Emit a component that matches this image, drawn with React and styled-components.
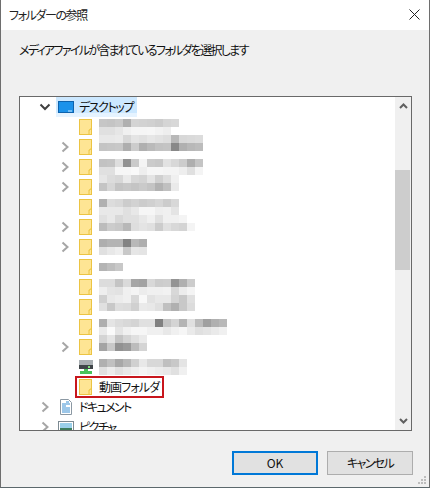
import React from 'react';
import styled, { createGlobalStyle } from 'styled-components';

const Global = createGlobalStyle`
  html, body {
    margin: 0;
    padding: 0;
    background: #f0f0f0;
  }
  body {
    font: 12px/16px "Noto Sans CJK JP", "Noto Sans", sans-serif;
    font-feature-settings: "palt";
    color: #111;
  }
`;

const Dialog = styled.div`
  position: relative;
  box-sizing: border-box;
  width: 430px;
  height: 488px;
  display: flex;
  flex-direction: column;
  background: #f0f0f0;
  border: 1px solid #6e6e6e;
  border-top: none;
  border-bottom-color: #5c686c;
`;

const TitleBar = styled.header`
  height: 30px;
  flex: none;
  display: flex;
  justify-content: space-between;
  align-items: center;
  padding: 0 9px 0 8px;
  background: #fff;
`;

const Title = styled.h1`
  margin: 0;
  font-size: 12px;
  font-weight: 400;
  letter-spacing: -1.4px;
  color: #222;
`;

const CloseIcon = styled.svg`
  display: block;
  width: 11px;
  height: 11px;
  margin-top: -2px;
`;

const Message = styled.p`
  margin: 12px 0 38px 18px;
  line-height: 16px;
  letter-spacing: -1.7px;
`;

const TreeBox = styled.div`
  box-sizing: border-box;
  width: 393px;
  height: 335px;
  margin-left: 18px;
  display: flex;
  background: #fff;
  border: 1px solid #696969;
`;

const TreeList = styled.ul`
  flex: 1;
  min-width: 0;
  margin: 0;
  padding: 0;
  list-style: none;
  overflow: hidden;
`;

const Row = styled.li`
  height: 20px;
  display: flex;
  align-items: center;
  gap: 3px;
  padding-left: ${p => (p.$level === 1 ? 17 : 37)}px;
`;

const Toggle = styled.svg`
  display: block;
  flex: none;
  width: 16px;
  height: 16px;
`;

const Item = styled.div`
  height: 20px;
  display: flex;
  align-items: center;
  gap: 5px;
  padding: 0 4px 0 2px;
  background: ${p =>
    p.$selected ? 'linear-gradient(#cce8ff 0 16px, #e5f3ff 16px)' : 'transparent'};
  box-shadow: ${p =>
    p.$marked ? '0 0 0 1px #c8161d, inset 0 0 0 1px #c8161d' : 'none'};
`;

const IconSlot = styled.svg`
  display: block;
  flex: none;
  width: 16px;
  height: 16px;
`;

const Label = styled.span`
  white-space: nowrap;
  letter-spacing: ${p => p.$spacing}px;
`;

const Blur = styled.svg`
  display: block;
  flex: none;
  align-self: flex-start;
  margin-top: ${p => p.$top}px;
  overflow: visible;
`;

const ScrollBar = styled.div`
  flex: none;
  width: 16px;
  display: flex;
  flex-direction: column;
  background: #f0f0f0;
`;

const ArrowBox = styled.div`
  flex: none;
  height: 17px;
  display: flex;
  align-items: center;
  justify-content: center;
`;

const Track = styled.div`
  flex: 1;
`;

const Thumb = styled.div`
  width: 15px;
  height: 100px;
  margin-top: 56px;
  background: #cdcdcd;
`;

const Footer = styled.footer`
  display: flex;
  justify-content: flex-end;
  gap: 9px;
  margin-top: 20px;
  padding-right: 16px;
`;

const Button = styled.button`
  box-sizing: border-box;
  width: 86px;
  height: 24px;
  padding: 0;
  font: inherit;
  font-feature-settings: inherit;
  letter-spacing: ${p => (p.$primary ? 0 : -1.6)}px;
  color: #111;
  background: #e1e1e1;
  border: ${p => (p.$primary ? '2px solid #0078d7' : '1px solid #adadad')};
  border-radius: 0;
`;

const Grip = styled.svg`
  position: absolute;
  right: 2px;
  bottom: 2px;
  width: 10px;
  height: 10px;
`;

const Folder = () => (
  <IconSlot viewBox="0 0 16 16">
    <rect x="1.5" y="0.5" width="12" height="15" fill="#fee594" stroke="#ecc443" />
    <path d="M11 16v-5h1v-1h2" fill="none" stroke="#ecc443" />
  </IconSlot>
);

const Desktop = () => (
  <IconSlot viewBox="0 0 16 16">
    <rect x="0.5" y="2.5" width="15" height="11" fill="#1b92ea" stroke="#0e63ad" />
    <path d="M10 12h4" stroke="#cdeaff" strokeWidth="1" />
  </IconSlot>
);

const Drive = () => (
  <IconSlot viewBox="0 0 16 16">
    <rect x="1" y="1" width="14" height="5" fill="#a9afb2" />
    <rect x="1" y="6" width="14" height="4" fill="#3f4548" />
    <rect x="10" y="7" width="2" height="2" fill="#7fe07a" />
    <path d="M6 10h4v2h4v3H2v-3h4z" fill="#49c25a" />
  </IconSlot>
);

const Documents = () => (
  <IconSlot viewBox="0 0 16 16">
    <path d="M2.5.5h8l3 3v12h-11z" fill="#fff" stroke="#8b98a3" />
    <path d="M8 3h3M4 5h8M4 7h4M4 9h8M4 11h8M4 13h8" stroke="#3a8fd3" />
  </IconSlot>
);

const Pictures = () => (
  <IconSlot viewBox="0 0 16 16">
    <rect x="0.5" y="2.5" width="15" height="12" fill="#fff" stroke="#7c8a92" />
    <rect x="2" y="4" width="12" height="5" fill="#9ad0ea" />
    <rect x="2" y="9" width="12" height="4" fill="#3d7d5d" />
  </IconSlot>
);

const Collapsed = () => (
  <Toggle viewBox="0 0 16 16">
    <path d="M5.5 3.5 10.5 8l-5 4.5" fill="none" stroke="#a6a6a6" strokeWidth="2" />
  </Toggle>
);

const Expanded = () => (
  <Toggle viewBox="0 0 16 16">
    <path d="M3.5 5.5 8 10l4.5-4.5" fill="none" stroke="#404040" strokeWidth="2" />
  </Toggle>
);

const Arrow = ({ up }) => (
  <svg width="9" height="7" viewBox="0 0 9 7">
    <path d={up ? 'M1 6 4.5 2.5 8 6' : 'M1 1l3.5 3.5L8 1'} fill="none" stroke="#606060" strokeWidth="2" />
  </svg>
);

// pixelated names from the screenshot, one string per 8px band of grey cells
const Pixels = ({ top, bands }) => {
  const lines = bands.map(b => b.split(' '));
  const width = Math.max(...lines.map(l => l.length)) * 8;
  return (
    <Blur $top={top} width={width} height={lines.length * 8} shapeRendering="crispEdges">
      {lines.map((cells, y) =>
        cells.map((c, x) => (
          <rect key={x} x={x * 8} y={y * 8} width="8" height="8" fill={`#${c}${c}${c}`} />
        ))
      )}
    </Blur>
  );
};

const folders = [
  { top: 2, bands: ['c6 c4 c9 b0 d4 d2 d0 cc d5 d8', 'e0 e0 e6 f0 f5 f5 f6 f2 ee'] },
  { open: true, top: -2, bands: ['e8 e8 ea d8 e4 e0 e6 e2 de b8 d8 da dc', 'c4 c6 c8 ae cc b0 ba c2 c4 88 b0 b8 bc'] },
  { open: true, top: 2, bands: ['c2 c4 de 92 ca f4 cb c8 e2 d8 cc ae c4', 'e0 e0 f6 f6 f9 ee f6 f6 f4 f4 ee e0 f4'] },
  { open: true, top: -2, bands: ['e6 dc d8 ea d8 d4 e4 d0 de f0', 'c4 d6 c4 c8 c4 ca c4 b2 c0 ea'] },
  { top: 2, bands: ['b0 dc d8 cc d2 cc d0 d6 cc d8', 'e8 e8 e8 e0 e8 f6 f6 ee f0 e4'] },
  { open: true, top: -2, bands: ['e0 e8 d8 e0 e0 e8 f0 e0 f0 f0 f4', 'bc cc c8 b8 de e4 e0 cc e0 d8 d4 f4'] },
  { open: true, top: 2, bands: ['ae b4 b4 82 b8 ae', 'e0 e8 ee c8 e6 e4'] },
  { top: 6, bands: ['b4 be c8'] },
  { top: 2, bands: ['dc dc c4 da a6 a2 d8 cc ce 94 b0 cc', 'ee e4 e2 f0 f4 ec f0 f0 f2 d8 ec f4'] },
  { top: -2, bands: ['d0 e8 ec f0 d8 f8 e2 e8 e8 d4 c8 e0', 'e0 c8 de dc d0 ea e8 e0 c0 b0 c8 dc'] },
  { top: 2, bands: ['ae e4 dc d8 d4 e0 e0 80 c4 d4 b4 e0 bc a0 b0 b8', 'ea fa e4 f0 f6 f6 f0 f0 e8 f0 f6 ea e0 e4 ea f0'] },
  { open: true, top: -2, bands: ['d4 e4 c4 d4 e0 ea', 'a4 c8 92 9a bc d4'] },
];

export default function App() {
  return (
    <>
      <Global />
      <Dialog>
        <TitleBar>
          <Title>フォルダーの参照</Title>
          <CloseIcon viewBox="0 0 11 11">
            <path d="M.5.5l10 10M10.5.5l-10 10" stroke="#222" fill="none" />
          </CloseIcon>
        </TitleBar>
        <Message>メディアファイルが含まれているフォルダを選択します</Message>
        <TreeBox>
          <TreeList>
            <Row $level={1}>
              <Expanded />
              <Item $selected>
                <Desktop />
                <Label $spacing={-1.4}>デスクトップ</Label>
              </Item>
            </Row>
            {folders.map((f, i) => (
              <Row $level={2} key={i}>
                {f.open ? <Collapsed /> : <Toggle />}
                <Item>
                  <Folder />
                  <Pixels top={f.top} bands={f.bands} />
                </Item>
              </Row>
            ))}
            <Row $level={2}>
              <Toggle />
              <Item>
                <Drive />
                <Pixels
                  top={2}
                  bands={['b0 c0 a8 b8 d0 e8 d8 d8 c0 c8 e4', 'e0 ec e0 e8 ee f4 f0 ec e8 e0 f0']}
                />
              </Item>
            </Row>
            <Row $level={2}>
              <Toggle />
              <Item $marked>
                <Folder />
                <Label $spacing={-0.9}>動画フォルダ</Label>
              </Item>
            </Row>
            <Row $level={1}>
              <Collapsed />
              <Item>
                <Documents />
                <Label $spacing={-1.6}>ドキュメント</Label>
              </Item>
            </Row>
            <Row $level={1}>
              <Collapsed />
              <Item>
                <Pictures />
                <Label $spacing={-1.5}>ピクチャ</Label>
              </Item>
            </Row>
          </TreeList>
          <ScrollBar>
            <ArrowBox><Arrow up /></ArrowBox>
            <Track><Thumb /></Track>
            <ArrowBox><Arrow /></ArrowBox>
          </ScrollBar>
        </TreeBox>
        <Footer>
          <Button $primary>OK</Button>
          <Button>キャンセル</Button>
        </Footer>
        <Grip viewBox="0 0 10 10">
          <path d="M7 1h2v2H7zM4 4h2v2H4zM7 4h2v2H7zM1 7h2v2H1zM4 7h2v2H4zM7 7h2v2H7z" fill="#bdbdbd" />
        </Grip>
      </Dialog>
    </>
  );
}
